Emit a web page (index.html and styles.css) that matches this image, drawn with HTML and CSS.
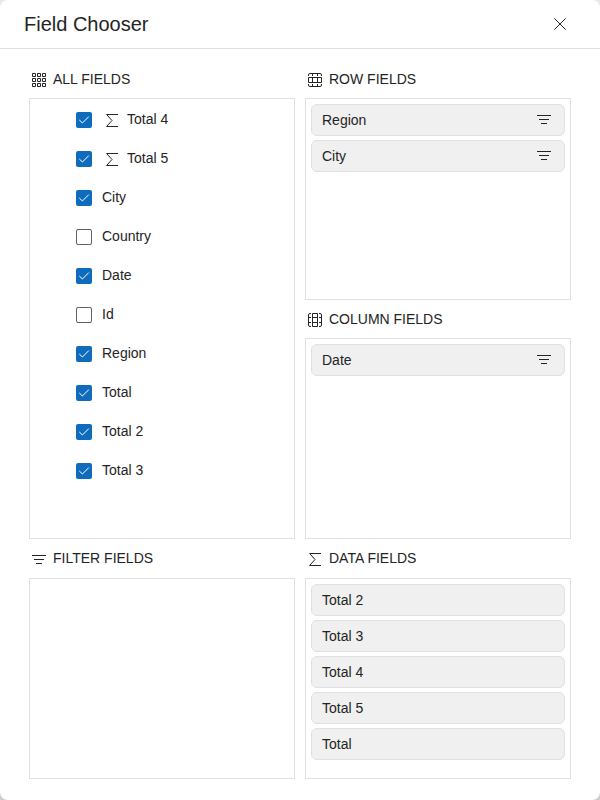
FILE: index.html
```
<!DOCTYPE html>
<html lang="en">
<head>
<meta charset="utf-8">
<title>Field Chooser</title>
<link rel="stylesheet" href="styles.css">
</head>
<body>
<svg class="defs" width="0" height="0">
  <symbol id="sigma" viewBox="0 0 14 14"><path d="M13 1.5H1.6L7 7.5L1.6 13.5H13"/></symbol>
  <symbol id="filter" viewBox="0 0 14 14"><path d="M0 3.5H14M2 7.5H12M4 11.5H10"/></symbol>
  <symbol id="check" viewBox="0 0 16 16"><path d="M3.3 8L6.4 11L12.8 4.6"/></symbol>
</svg>
<div class="popup">
  <header class="title-bar">
    <h1>Field Chooser</h1>
    <svg class="close" viewBox="0 0 12 12"><path d="M.3 .3L11.7 11.7M11.7 .3L.3 11.7"/></svg>
  </header>
  <main class="content">
    <section class="area all">
      <h2><svg class="icon"><path d="M.5.5h3v3h-3zM5.5.5h3v3h-3zM10.5.5h3v3h-3zM.5 5.5h3v3h-3zM5.5 5.5h3v3h-3zM10.5 5.5h3v3h-3zM.5 10.5h3v3h-3zM5.5 10.5h3v3h-3zM10.5 10.5h3v3h-3z"/></svg>ALL FIELDS</h2>
      <ul class="box tree">
        <li><span class="check on"><svg><use href="#check"/></svg></span><svg class="icon sum"><use href="#sigma"/></svg>Total 4</li>
        <li><span class="check on"><svg><use href="#check"/></svg></span><svg class="icon sum"><use href="#sigma"/></svg>Total 5</li>
        <li><span class="check on"><svg><use href="#check"/></svg></span>City</li>
        <li><span class="check"></span>Country</li>
        <li><span class="check on"><svg><use href="#check"/></svg></span>Date</li>
        <li><span class="check"></span>Id</li>
        <li><span class="check on"><svg><use href="#check"/></svg></span>Region</li>
        <li><span class="check on"><svg><use href="#check"/></svg></span>Total</li>
        <li><span class="check on"><svg><use href="#check"/></svg></span>Total 2</li>
        <li><span class="check on"><svg><use href="#check"/></svg></span>Total 3</li>
      </ul>
    </section>
    <section class="area">
      <h2><svg class="icon"><path d="M.5 4.5H13.5V9.5H.5zM4.5 4v6M9.5 4v6M.5 3V2Q.5 .5 2 .5H12Q13.5 .5 13.5 2V3M.5 11V12Q.5 13.5 2 13.5H12Q13.5 13.5 13.5 12V11M4.5 1V3M9.5 1V3M4.5 11V13M9.5 11V13"/></svg>ROW FIELDS</h2>
      <ul class="box">
        <li class="field">Region<svg class="icon"><use href="#filter"/></svg></li>
        <li class="field">City<svg class="icon"><use href="#filter"/></svg></li>
      </ul>
    </section>
    <section class="area">
      <h2><svg class="icon"><path d="M4.5 .5H9.5V13.5H4.5zM4 4.5h6M4 9.5h6M3 .5H2Q.5 .5 .5 2V12Q.5 13.5 2 13.5H3M11 .5H12Q13.5 .5 13.5 2V12Q13.5 13.5 12 13.5H11M1 4.5H3M1 9.5H3M11 4.5H13M11 9.5H13"/></svg>COLUMN FIELDS</h2>
      <ul class="box">
        <li class="field">Date<svg class="icon"><use href="#filter"/></svg></li>
      </ul>
    </section>
    <section class="area bottom">
      <h2><svg class="icon"><use href="#filter"/></svg>FILTER FIELDS</h2>
      <ul class="box"></ul>
    </section>
    <section class="area bottom">
      <h2><svg class="icon"><use href="#sigma"/></svg>DATA FIELDS</h2>
      <ul class="box">
        <li class="field">Total 2</li>
        <li class="field">Total 3</li>
        <li class="field">Total 4</li>
        <li class="field">Total 5</li>
        <li class="field">Total</li>
      </ul>
    </section>
  </main>
</div>
</body>
</html>
```

FILE: styles.css
```
* { box-sizing: border-box; }
body {
  margin: 0;
  background: linear-gradient(#e8e8e8, #cecece);
  color: #242424;
  font: 14px/20px "Liberation Sans", Arial, sans-serif;
}
h1, h2, ul { margin: 0; padding: 0; font-weight: 400; list-style: none; }
svg { fill: none; stroke: #242424; stroke-width: 1; flex: none; }
.defs { display: block; }
.popup {
  display: flex;
  flex-direction: column;
  height: 800px;
  background: #fff;
  border-radius: 8px;
  overflow: hidden;
}
.title-bar {
  display: flex;
  align-items: center;
  justify-content: space-between;
  height: 49px;
  padding: 0 34px 0 24px;
  border-bottom: 1px solid #e0e0e0;
}
h1 { font-size: 20px; line-height: 28px; }
.close { width: 12px; height: 12px; }
.content {
  display: grid;
  grid-template-columns: 266px 266px;
  grid-template-rows: 240px 239px 240px;
  column-gap: 10px;
  padding: 11px 29px 0;
}
.area { display: flex; flex-direction: column; min-height: 0; }
.all { grid-row: 1 / 3; }
h2 {
  display: flex;
  align-items: center;
  gap: 7px;
  height: 38px;
  padding-left: 3px;
  font-size: 14px;
}
.bottom h2 { margin-bottom: 1px; }
.icon { display: block; width: 14px; height: 14px; }
h2 .icon { margin-top: 2px; }
.box { flex: 1; border: 1px solid #e0e0e0; padding: 5px; }
.tree { padding: 0 0 0 46px; }
.tree li { display: flex; align-items: center; height: 39px; }
.check {
  width: 16px;
  height: 16px;
  margin: 3px 10px 0 0;
  border: 1px solid #616161;
  border-radius: 2px;
}
.check.on { border: 0; background: #0f6cbd; }
.check svg { display: block; width: 16px; height: 16px; stroke: #fff; }
.sum { margin: 3px 8px 0 3px; }
.field {
  display: flex;
  align-items: center;
  justify-content: space-between;
  height: 32px;
  margin-bottom: 4px;
  padding: 0 13px 0 10px;
  background: #f0f0f0;
  border: 1px solid #e0e0e0;
  border-radius: 6px;
}
.field .icon { margin-top: -2px; }
```
